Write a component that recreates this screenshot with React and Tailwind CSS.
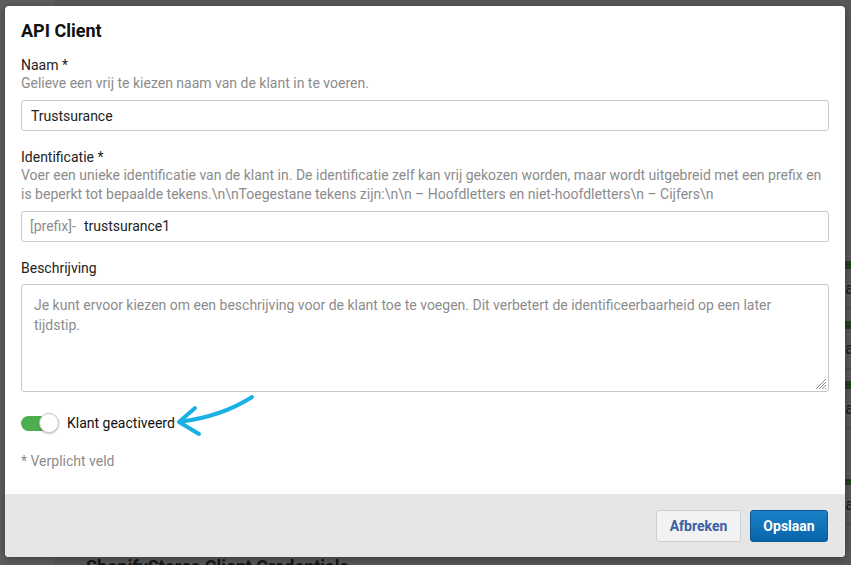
import React from "react";

function BgRow({ label, band = 8 }) {
  return (
    <div className="flex flex-col">
      <div className="bg-[#23401f]" style={{ height: band }} />
      <div className="h-[40px] flex items-center justify-end text-[16px] text-[#1c1c1c] border-b border-[#4a4a4a] mr-[-3px]">{label}</div>
      <div className="h-[12px]" />
    </div>
  );
}

export default function App() {
  return (
    <div
      className="relative w-[851px] h-[565px] overflow-hidden bg-[#595959]"
      style={{ fontFamily: "Roboto, 'Liberation Sans', sans-serif" }}
    >
      {/* background page (behind overlay) */}
      <div className="flex h-full">
        <div className="w-[54px] h-full bg-[#5e5e5e]" />
        <div className="flex-1 flex flex-col pl-[32px] pt-[47px]">
          <div className="h-[1px] bg-[#2c4a2a] mb-[214px]" />
          <BgRow label="a" />
          <BgRow label="a" />
          <BgRow label="a" />
          <div className="h-[38px] shrink-0" />
          <BgRow label="a" band={6} />
          <div className="h-[18px] shrink-0" />
          <div className="text-[18px] font-bold text-[#151515] leading-[24px] whitespace-nowrap">ShopifyStores Client Credentials</div>
        </div>
      </div>

      {/* dialog */}
      <div className="absolute left-[5px] top-[6px] w-[840px] h-[551px] bg-white rounded-[4px] shadow-[0_2px_10px_rgba(0,0,0,0.35)] flex flex-col overflow-hidden">
        <div className="flex-1 px-[16px] pt-[13px] flex flex-col">
          <h2 className="text-[18px] font-bold leading-[24px] text-[#111]">API Client</h2>

          <div className="mt-[13px] text-[14px] leading-[18px] text-[#222]">Naam *</div>
          <div className="text-[14px] leading-[18px] text-[#8c8c8c]">Gelieve een vrij te kiezen naam van de klant in te voeren.</div>
          <div className="mt-[8px] h-[31px] w-[808px] border border-[#c8c8c8] rounded-[3px] flex items-center px-[9px] pt-[2px] text-[14px] text-[#222]">
            Trustsurance
          </div>

          <div className="mt-[17px] text-[14px] leading-[18px] text-[#222]">Identificatie *</div>
          <div className="text-[14px] leading-[19px] text-[#8c8c8c] w-[808px]">
            Voer een unieke identificatie van de klant in. De identificatie zelf kan vrij gekozen worden, maar wordt uitgebreid met een prefix en is beperkt tot bepaalde tekens.\n\nToegestane tekens zijn:\n\n – Hoofdletters en niet-hoofdletters\n – Cijfers\n
          </div>
          <div className="mt-[7px] h-[31px] w-[808px] border border-[#c8c8c8] rounded-[3px] flex items-center px-[8px] text-[14px]">
            <span className="text-[#8c8c8c]">[prefix]-</span>
            <span className="ml-[8px] text-[#222]">trustsurance1</span>
          </div>

          <div className="mt-[17px] text-[14px] leading-[18px] text-[#222]">Beschrijving</div>
          <div className="relative mt-[7px] h-[108px] w-[808px] border border-[#c8c8c8] rounded-[3px] px-[12px] pt-[10px] text-[14px] leading-[20px] text-[#8c8c8c]">
            Je kunt ervoor kiezen om een beschrijving voor de klant toe te voegen. Dit verbetert de identificeerbaarheid op een later tijdstip.
            <svg className="absolute right-[1px] bottom-[1px]" width="14" height="14" viewBox="0 0 14 14">
              <path d="M13 3 L3 13 M13 6 L6 13 M13 9 L9 13 M13 12 L12 13" stroke="#8a8a8a" strokeWidth="1" />
            </svg>
          </div>

          <div className="mt-[21px] h-[20px] flex items-center">
            <div className="relative w-[38px] h-[20px] flex items-center">
              <div className="w-[36px] h-[15px] rounded-full bg-[#4cae50]" />
              <div className="absolute right-0 top-0 w-[20px] h-[20px] rounded-full bg-white border border-[#c6c6c6] shadow-[0_1px_2px_rgba(0,0,0,0.25)]" />
            </div>
            <span className="ml-[8px] text-[14px] text-[#111]">Klant geactiveerd</span>
          </div>

          <div className="mt-[19px] text-[14px] leading-[18px] text-[#8c8c8c]">* Verplicht veld</div>
        </div>

        <div className="h-[63px] bg-[#e6e6e6] flex items-center justify-end gap-[9px] pr-[17px] pt-[1px]">
          <button className="h-[32px] w-[85px] rounded-[3px] border border-[#cfcfcf] bg-[#f2f2f2] text-[14px] font-bold text-[#3a5ea8]">
            Afbreken
          </button>
          <button className="h-[32px] w-[78px] rounded-[3px] border border-[#0a5a98] bg-gradient-to-b from-[#1a82c8] to-[#0a64aa] text-[14px] font-bold text-white">
            Opslaan
          </button>
        </div>
      </div>

      {/* annotation arrow */}
      <svg className="absolute left-0 top-0 pointer-events-none" width="851" height="565" viewBox="0 0 851 565">
        <path
          d="M252 397 C 235 408, 210 418, 179 422 M179 422 L195 408 M179 422 L199 434"
          fill="none"
          stroke="#19b1e3"
          strokeWidth="4"
          strokeLinecap="round"
          strokeLinejoin="round"
        />
      </svg>
    </div>
  );
}
